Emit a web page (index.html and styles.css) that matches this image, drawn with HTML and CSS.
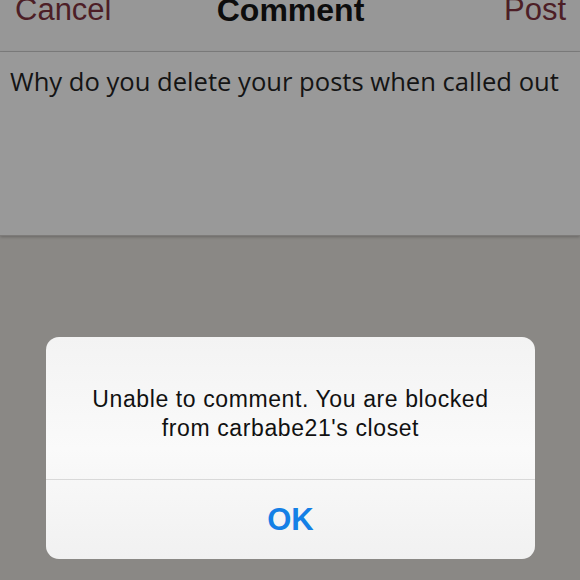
FILE: index.html
```html
<!DOCTYPE html>
<html>
<head>
<meta charset="utf-8">
<link rel="stylesheet" href="styles.css">
</head>
<body>
<div class="screen">
  <header class="nav">
    <span class="nav-btn nav-left">Cancel</span>
    <span class="nav-title">Comment</span>
    <span class="nav-btn nav-right">Post</span>
  </header>
  <section class="compose">
    <p class="compose-text">Why do you delete your posts when called out</p>
  </section>
  <main class="backdrop">
    <div class="alert">
      <div class="alert-body">
        <p class="alert-msg">Unable to comment. You are blocked<br>from carbabe21's closet</p>
      </div>
      <div class="alert-action">OK</div>
    </div>
  </main>
</div>
</body>
</html>
```
FILE: styles.css
```css
* { box-sizing: border-box; margin: 0; padding: 0; }
html, body { width: 580px; height: 580px; overflow: hidden; }
body { font-family: "Liberation Sans", Arial, sans-serif; background: #8a8885; }
.screen { display: flex; flex-direction: column; height: 580px; }
.nav {
  height: 52px;
  background: #979797;
  border-bottom: 1px solid #7f7f7f;
  display: grid;
  grid-template-columns: 1fr auto 1fr;
  align-items: start;
  padding: 0 14px 0 15px;
  line-height: 1;
}
.nav span { font-size: 31px; margin-top: -6px; }
.nav-btn { color: #4d1e26; }
.nav-left { justify-self: start; }
.nav-right { justify-self: end; }
.nav-title { color: #0d0d0d; font-weight: bold; font-size: 32px !important; }
.compose {
  height: 184px;
  background: #999999;
  border-bottom: 1px solid #7d7b79;
  box-shadow: 0 1px 3px rgba(0,0,0,0.25);
  padding: 12px 10px 0 10px;
}
.compose-text { font-family: "Open Sans", "Liberation Sans", sans-serif; font-size: 25.6px; color: #141414; white-space: nowrap; }
.backdrop {
  flex: 1;
  display: flex;
  justify-content: center;
  padding-top: 101px;
  padding-left: 46px;
  padding-right: 45px;
}
.alert {
  width: 489px;
  height: 222px;
  background: linear-gradient(#f3f3f3, #fafafa 50%, #f1f1f1);
  border-radius: 13px;
  display: flex;
  flex-direction: column;
  overflow: hidden;
}
.alert-body {
  height: 143px;
  border-bottom: 1px solid #d9d9d9;
  display: flex;
  align-items: center;
  justify-content: center;
  padding-top: 12px;
}
.alert-msg { font-size: 23px; line-height: 29px; letter-spacing: 0.6px; text-align: center; color: #111; }
.alert-action {
  flex: 1;
  display: flex;
  align-items: center;
  justify-content: center;
  color: #1480e6;
  font-weight: bold;
  font-size: 31px;
}
```
